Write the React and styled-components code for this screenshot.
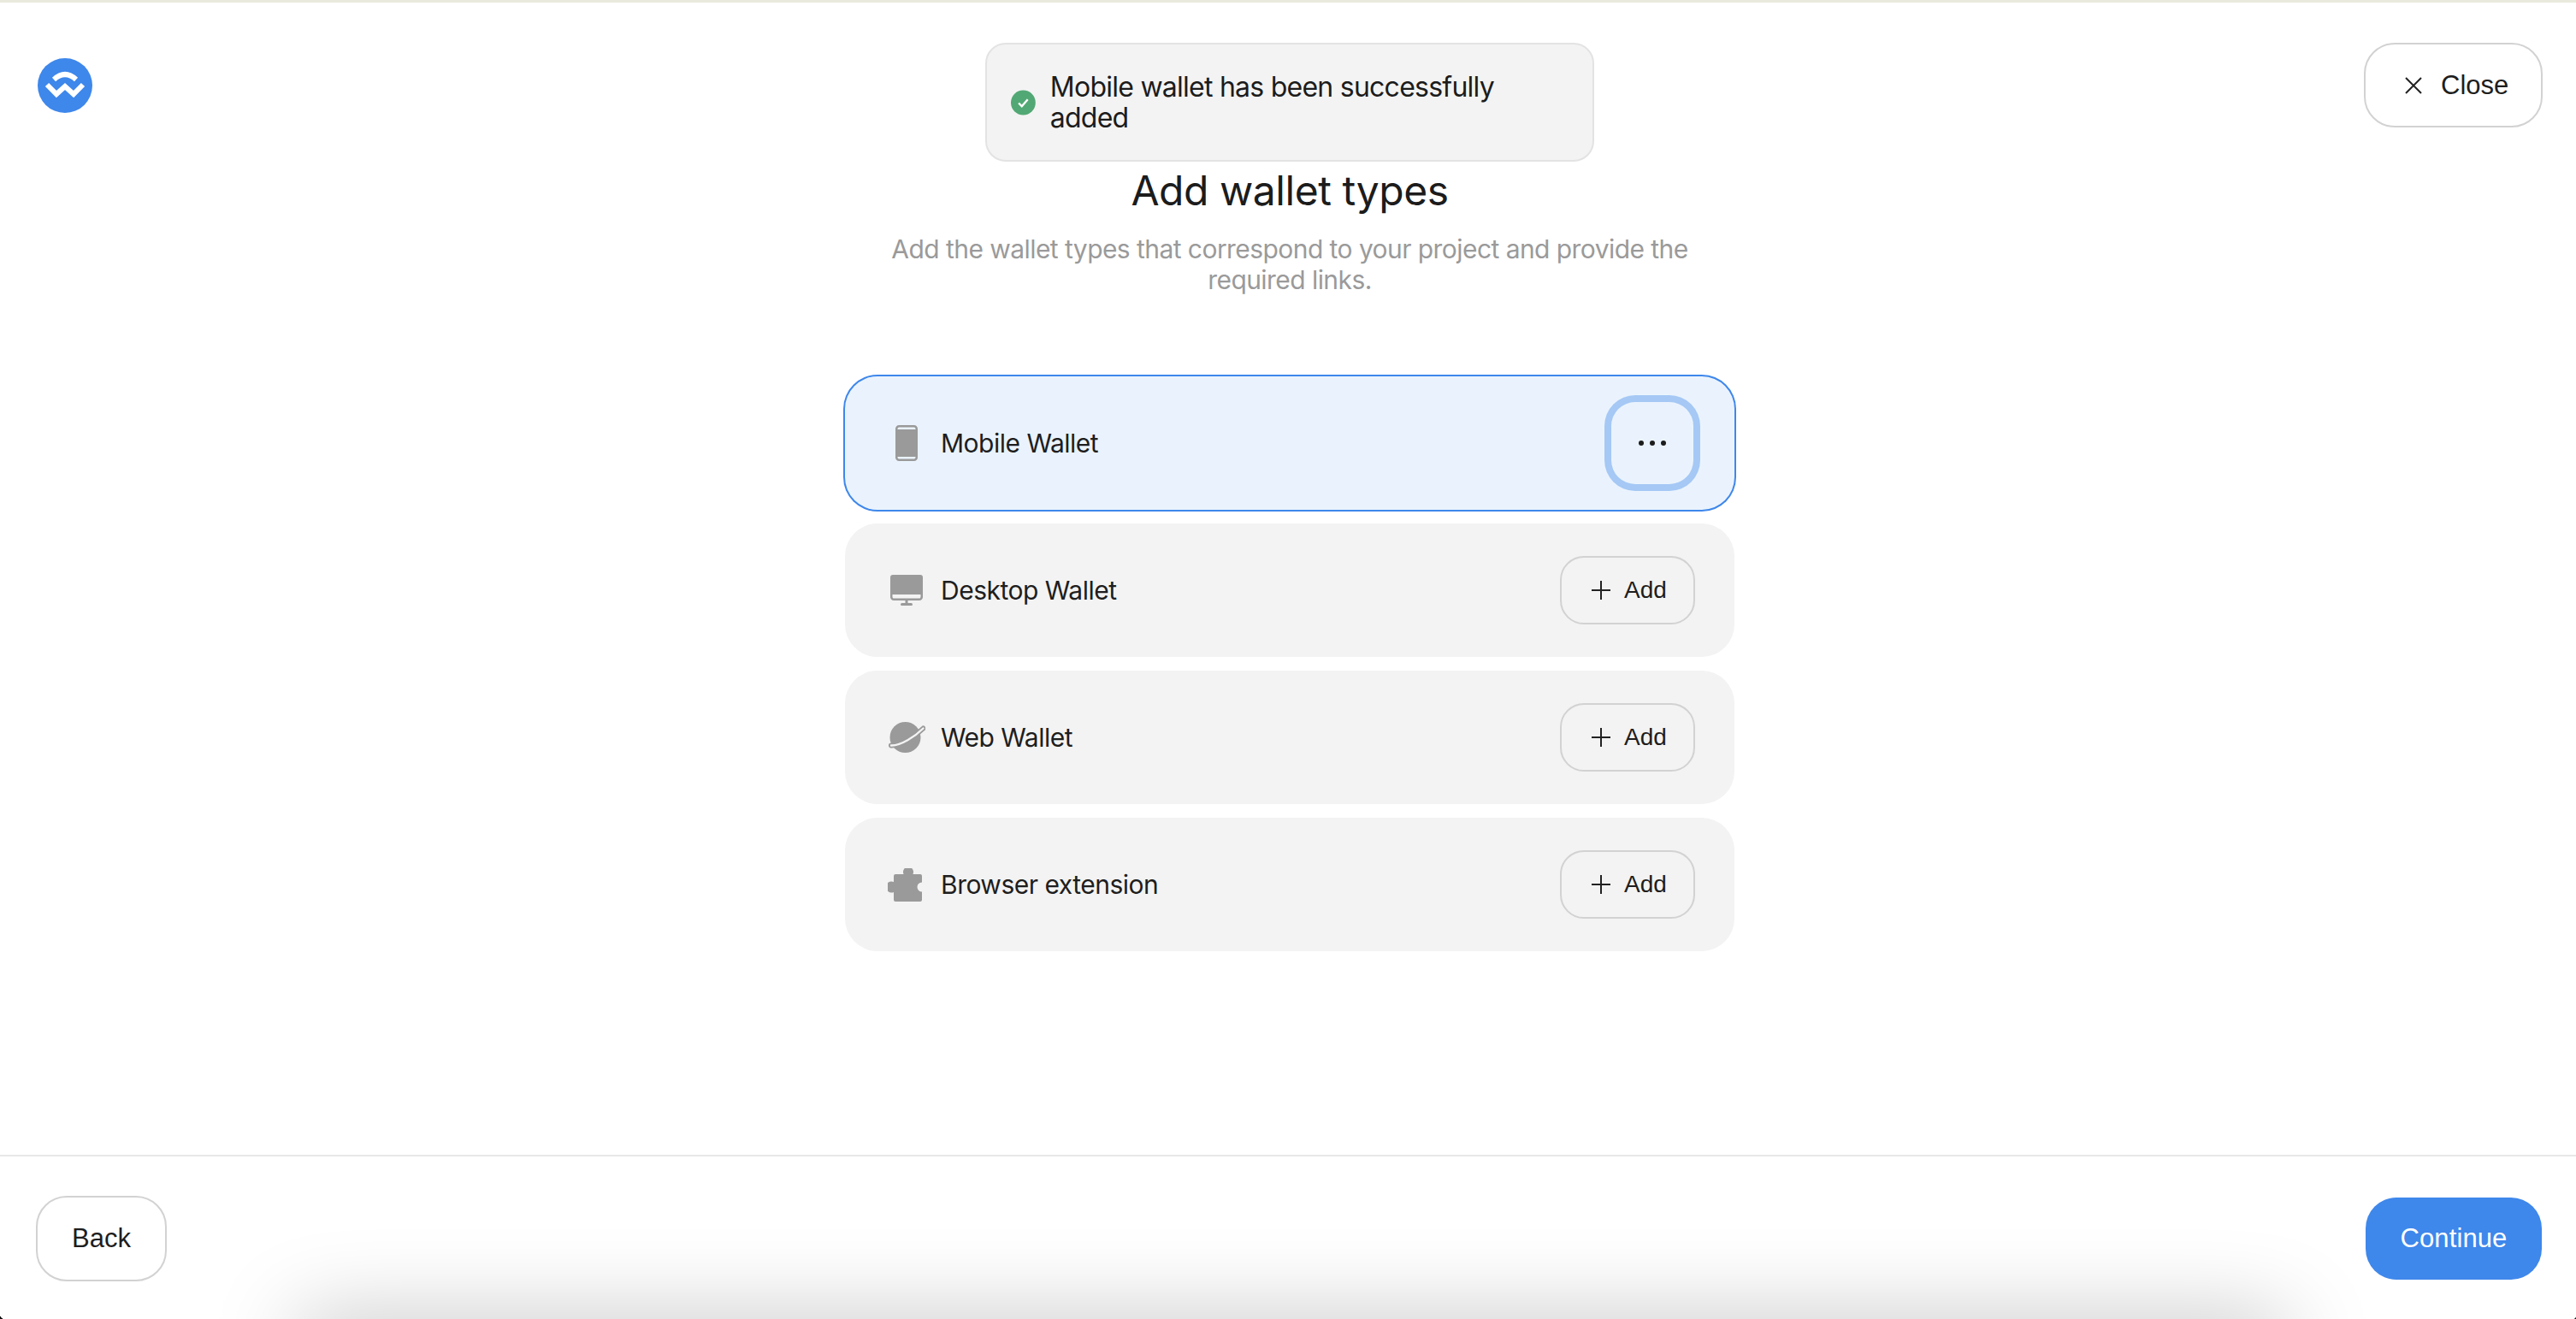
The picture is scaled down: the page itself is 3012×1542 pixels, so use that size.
import React from 'react'
import styled, { createGlobalStyle } from 'styled-components'

const GlobalStyle = createGlobalStyle`
  html, body {
    margin: 0;
    padding: 0;
    background: #fff;
  }
  * {
    box-sizing: border-box;
  }
`

const wallets = [
  { name: 'Mobile Wallet', icon: 'mobile', added: true },
  { name: 'Desktop Wallet', icon: 'desktop' },
  { name: 'Web Wallet', icon: 'web' },
  { name: 'Browser extension', icon: 'extension' },
]

const Logo = () => (
  <svg width='64' height='64' viewBox='0 0 64 64'>
    <circle cx='32' cy='32' r='32' fill='#3e87eb' />
    <path d='M19 25Q32 13 45 25' fill='none' stroke='#fff' strokeWidth='6' />
    <path d='M11 31L22 42L32 33L42 42L53 31' fill='none' stroke='#fff' strokeWidth='6' />
  </svg>
)

const CheckIcon = () => (
  <svg width='30' height='30' viewBox='0 0 30 30'>
    <circle cx='15' cy='15' r='15' fill='#52a874' />
    <path d='M9.5 15.5L13.3 19.5L20.5 11' fill='none' stroke='#fff' strokeWidth='2.4' />
  </svg>
)

const CloseIcon = () => (
  <svg width='20' height='20' viewBox='0 0 20 20'>
    <path d='M1 1L19 19M19 1L1 19' stroke='#222' strokeWidth='2' />
  </svg>
)

const PlusIcon = () => (
  <svg width='22' height='22' viewBox='0 0 22 22'>
    <path d='M11 0V22M0 11H22' stroke='#222' strokeWidth='2' />
  </svg>
)

const DotsIcon = () => (
  <svg width='32' height='6' viewBox='0 0 32 6'>
    <circle cx='3' cy='3' r='3' fill='#1c1c1c' />
    <circle cx='16' cy='3' r='3' fill='#1c1c1c' />
    <circle cx='29' cy='3' r='3' fill='#1c1c1c' />
  </svg>
)

const MobileIcon = () => (
  <svg width='26' height='42' viewBox='0 0 26 42'>
    <rect x='1.25' y='1.25' width='23.5' height='39.5' rx='3' fill='none' stroke='#9a9a9a' strokeWidth='2.5' />
    <rect x='1.25' y='5' width='23.5' height='32' fill='#9a9a9a' />
  </svg>
)

const DesktopIcon = () => (
  <svg width='38' height='36' viewBox='0 0 38 36'>
    <path d='M3 0H35A3 3 0 0 1 38 3V23H0V3A3 3 0 0 1 3 0Z' fill='#9a9a9a' />
    <path d='M1.25 23V25.5A3 3 0 0 0 4.25 28.75H33.75A3 3 0 0 0 36.75 25.5V23' fill='none' stroke='#9a9a9a' strokeWidth='2.5' />
    <rect x='17.5' y='30' width='3' height='3' fill='#9a9a9a' />
    <rect x='12' y='33' width='14' height='3' rx='1.5' fill='#9a9a9a' />
  </svg>
)

const WebIcon = () => (
  <svg width='44' height='36' viewBox='0 0 44 36'>
    <circle cx='20.5' cy='18' r='18' fill='#9a9a9a' />
    <path d='M4 27.5C15 28 32 17 41.5 7.5' fill='none' stroke='#9a9a9a' strokeWidth='6' strokeLinecap='round' />
    <path d='M4 27.5C15 28 32 17 41.5 7.5' fill='none' stroke='#f3f3f3' strokeWidth='2.4' strokeLinecap='round' />
  </svg>
)

const ExtensionIcon = () => (
  <svg width='44' height='39' viewBox='0 0 44 39'>
    <path
      d='M9 7H18.6A6 6 0 1 1 29.4 7H38A2 2 0 0 1 40 9V16.5A5.5 5.5 0 0 0 40 27.5V37A2 2 0 0 1 38 39H9A2 2 0 0 1 7 37V28A6.5 6.5 0 1 1 7 16V9A2 2 0 0 1 9 7Z'
      fill='#9a9a9a'
    />
  </svg>
)

const icons = {
  mobile: MobileIcon,
  desktop: DesktopIcon,
  web: WebIcon,
  extension: ExtensionIcon,
}

const App = () => (
  <Page>
    <GlobalStyle />
    <TopStrip />
    <Header>
      <Logo />
      <CloseButton>
        <CloseIcon />
        Close
      </CloseButton>
    </Header>
    <Toast>
      <CheckIcon />
      <ToastText>Mobile wallet has been successfully added</ToastText>
    </Toast>
    <Main>
      <Title>Add wallet types</Title>
      <Subtitle>
        Add the wallet types that correspond to your project and provide the required links.
      </Subtitle>
      <List>
        {wallets.map((wallet) => {
          const Icon = icons[wallet.icon]
          return (
            <Row key={wallet.name} $active={wallet.added}>
              <RowLabel>
                <IconBox>
                  <Icon />
                </IconBox>
                {wallet.name}
              </RowLabel>
              {wallet.added ? (
                <MoreButton>
                  <DotsIcon />
                </MoreButton>
              ) : (
                <AddButton>
                  <PlusIcon />
                  Add
                </AddButton>
              )}
            </Row>
          )
        })}
      </List>
    </Main>
    <Footer>
      <BackButton>Back</BackButton>
      <ContinueButton>Continue</ContinueButton>
    </Footer>
    <BottomShadow />
    <CornerLeft />
    <CornerRight />
  </Page>
)

const Page = styled.div`
  position: relative;
  height: 100vh;
  overflow: hidden;
  display: flex;
  flex-direction: column;
  background: #fff;
  color: #1e1e1e;
  font-family: Inter, "Liberation Sans", sans-serif;
`

const TopStrip = styled.div`
  height: 3px;
  flex: none;
  background: #e9e9dd;
`

const Header = styled.header`
  flex: none;
  height: 146px;
  padding: 47px 39px 0 44px;
  display: flex;
  align-items: center;
  justify-content: space-between;
`

const OutlineButton = styled.button`
  display: flex;
  align-items: center;
  justify-content: center;
  border: 2px solid #d2d2d2;
  background: transparent;
  color: #1e1e1e;
  font-family: "Liberation Sans", Arial, sans-serif;
  font-size: 31px;
  padding: 0;
`

const CloseButton = styled(OutlineButton)`
  width: 209px;
  height: 99px;
  padding-left: 46px;
  justify-content: flex-start;
  gap: 22px;
  border-radius: 36px;
`

const Toast = styled.div`
  position: absolute;
  top: 50px;
  left: 1152px;
  width: 712px;
  height: 139px;
  padding: 0 40px 0 28px;
  display: flex;
  align-items: center;
  gap: 17px;
  background: #f3f3f3;
  border: 2px solid #e3e3e3;
  border-radius: 24px;
`

const ToastText = styled.div`
  font-size: 32px;
  line-height: 36px;
  letter-spacing: -0.75px;
  color: #1c1c1c;
`

const Main = styled.main`
  flex: 1;
  padding: 46px 0 0 4px;
  display: flex;
  flex-direction: column;
  align-items: center;
`

const Title = styled.h1`
  margin: 0;
  font-size: 48px;
  line-height: 56px;
  font-weight: 400;
  letter-spacing: -0.45px;
  color: #1c1c1c;
`

const Subtitle = styled.p`
  margin: 22px 0 0;
  width: 960px;
  font-size: 30px;
  line-height: 36px;
  letter-spacing: -0.56px;
  text-align: center;
  color: #9a9a9a;
`

const List = styled.div`
  margin-top: 95px;
  width: 1040px;
  display: flex;
  flex-direction: column;
  gap: 16px;
`

const Row = styled.div`
  height: 156px;
  padding: 0 48px;
  display: flex;
  align-items: center;
  justify-content: space-between;
  border-radius: 38px;
  background: ${(p) => (p.$active ? '#eaf3fd' : '#f3f3f3')};
  box-shadow: ${(p) => (p.$active ? '0 0 0 2px #3e87eb' : 'none')};
`

const RowLabel = styled.div`
  display: flex;
  align-items: center;
  gap: 16px;
  font-size: 30px;
  letter-spacing: -0.5px;
  color: #1e1e1e;
`

const IconBox = styled.span`
  width: 48px;
  display: flex;
  align-items: center;
  justify-content: center;
`

const MoreButton = styled.button`
  width: 96px;
  height: 96px;
  padding: 0;
  display: flex;
  align-items: center;
  justify-content: center;
  border: none;
  border-radius: 28px;
  background: transparent;
  box-shadow: 0 0 0 8px #a5c8f5;
`

const AddButton = styled(OutlineButton)`
  width: 158px;
  height: 80px;
  margin-right: -2px;
  padding-left: 35px;
  justify-content: flex-start;
  gap: 16px;
  border-radius: 28px;
  font-size: 28px;
`

const Footer = styled.footer`
  flex: none;
  height: 192px;
  padding: 46px 40px 0 42px;
  display: flex;
  align-items: flex-start;
  justify-content: space-between;
  border-top: 2px solid #e8e8e8;
`

const BackButton = styled(OutlineButton)`
  width: 153px;
  height: 100px;
  border-radius: 36px;
`

const ContinueButton = styled.button`
  margin-top: 2px;
  width: 206px;
  height: 96px;
  border: none;
  border-radius: 36px;
  background: #3e87eb;
  color: #fff;
  font-family: "Liberation Sans", Arial, sans-serif;
  font-size: 31px;
  letter-spacing: 0.1px;
  padding: 0;
`

const BottomShadow = styled.div`
  position: absolute;
  left: 350px;
  right: 340px;
  bottom: -70px;
  height: 70px;
  box-shadow: 0 0 100px rgba(0, 0, 0, 0.25);
`

const CornerLeft = styled.div`
  position: absolute;
  left: 0;
  bottom: 0;
  width: 6px;
  height: 6px;
  background: radial-gradient(circle at 100% 0, transparent 6px, #111 6.5px);
`

const CornerRight = styled.div`
  position: absolute;
  right: 0;
  bottom: 0;
  width: 4px;
  height: 4px;
  background: radial-gradient(circle at 0 0, transparent 4px, #111 4.5px);
`

export default App
